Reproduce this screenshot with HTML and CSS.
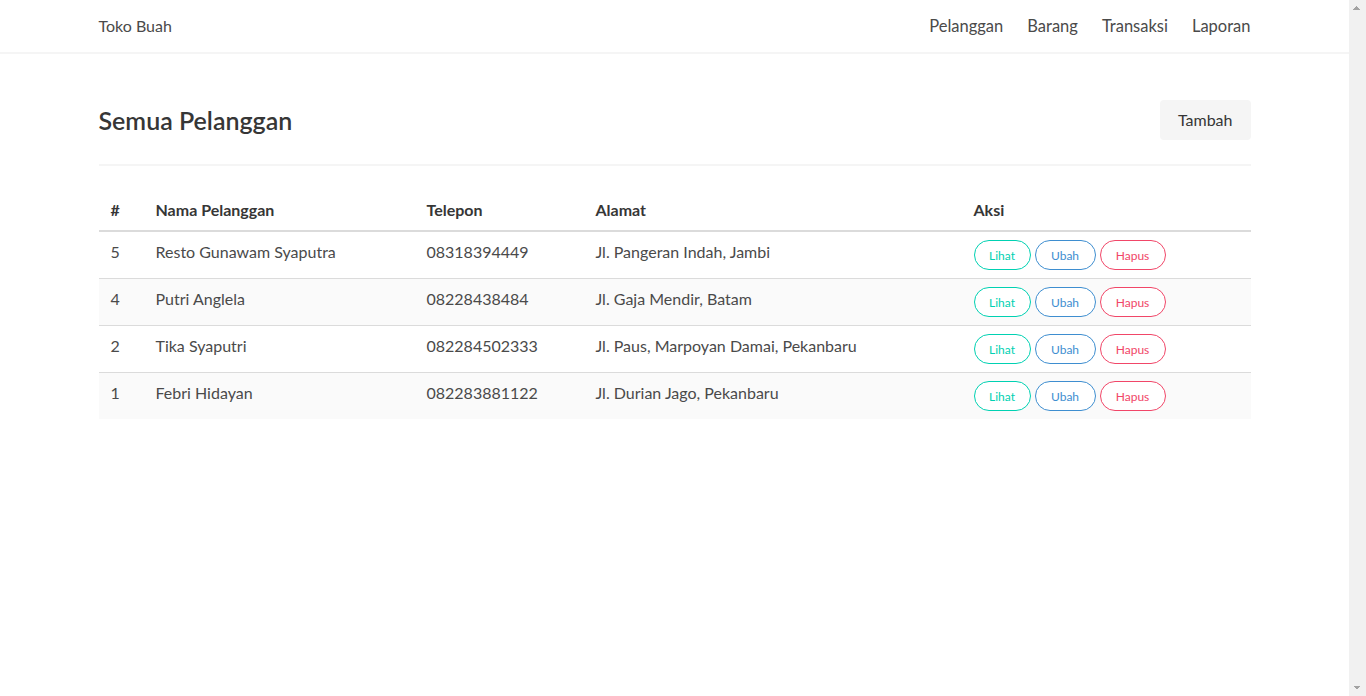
FILE: index.html
```html
<!DOCTYPE html>
<html lang="id">
<head>
<meta charset="utf-8">
<title>Toko Buah</title>
<link rel="stylesheet" href="styles.css">
</head>
<body>
<nav class="navbar">
  <div class="container nav-inner">
    <a class="nav-item brand" href="#">Toko Buah</a>
    <div class="nav-end">
      <a class="nav-item" href="#">Pelanggan</a>
      <a class="nav-item" href="#">Barang</a>
      <a class="nav-item" href="#">Transaksi</a>
      <a class="nav-item" href="#">Laporan</a>
    </div>
  </div>
</nav>
<section class="section">
  <div class="container">
    <div class="level">
      <h1 class="title">Semua Pelanggan</h1>
      <a class="btn-add" href="#">Tambah</a>
    </div>
    <hr class="divider">
    <table class="table">
      <thead>
        <tr>
          <th class="c-no">#</th>
          <th class="c-name">Nama Pelanggan</th>
          <th class="c-tel">Telepon</th>
          <th class="c-addr">Alamat</th>
          <th class="c-act">Aksi</th>
        </tr>
      </thead>
      <tbody>
        <tr>
          <td>5</td><td>Resto Gunawam Syaputra</td><td>08318394449</td><td>Jl. Pangeran Indah, Jambi</td>
          <td><div class="actions"><a class="pill pill-view" href="#">Lihat</a><a class="pill pill-edit" href="#">Ubah</a><a class="pill pill-del" href="#">Hapus</a></div></td>
        </tr>
        <tr>
          <td>4</td><td>Putri Anglela</td><td>08228438484</td><td>Jl. Gaja Mendir, Batam</td>
          <td><div class="actions"><a class="pill pill-view" href="#">Lihat</a><a class="pill pill-edit" href="#">Ubah</a><a class="pill pill-del" href="#">Hapus</a></div></td>
        </tr>
        <tr>
          <td>2</td><td>Tika Syaputri</td><td>082284502333</td><td>Jl. Paus, Marpoyan Damai, Pekanbaru</td>
          <td><div class="actions"><a class="pill pill-view" href="#">Lihat</a><a class="pill pill-edit" href="#">Ubah</a><a class="pill pill-del" href="#">Hapus</a></div></td>
        </tr>
        <tr>
          <td>1</td><td>Febri Hidayan</td><td>082283881122</td><td>Jl. Durian Jago, Pekanbaru</td>
          <td><div class="actions"><a class="pill pill-view" href="#">Lihat</a><a class="pill pill-edit" href="#">Ubah</a><a class="pill pill-del" href="#">Hapus</a></div></td>
        </tr>
      </tbody>
    </table>
  </div>
</section>
</body>
</html>
```
FILE: styles.css
```css
/* page frame with a classic 17px scrollbar track at the right edge */
html {
  height: 100%;
  background-color: #f1f1f1;
  background-image:
    linear-gradient(to top left, #a3a3a3 50%, transparent 50%),
    linear-gradient(to top right, #a3a3a3 50%, transparent 50%),
    linear-gradient(to bottom left, #a3a3a3 50%, transparent 50%),
    linear-gradient(to bottom right, #a3a3a3 50%, transparent 50%);
  background-size: 4px 4px;
  background-repeat: no-repeat;
  background-position:
    right 9px top 6px,
    right 5px top 6px,
    right 9px bottom 6px,
    right 5px bottom 6px;
}
* { box-sizing: border-box; }
body {
  margin: 0 17px 0 0;
  min-height: 100%;
  font-family: "Lato", "Open Sans", sans-serif;
  font-size: 16px;
  line-height: 1.5;
  color: #4a4a4a;
  background: #fff;
}
a { text-decoration: none; color: inherit; }

.container {
  width: 1152px;
  margin: 0 auto;
}

.navbar {
  height: 52px;
  background: #fff;
  box-shadow: 0 2px 0 0 #f5f5f5;
}
.nav-inner {
  display: flex;
  align-items: stretch;
  justify-content: space-between;
  height: 52px;
}
.nav-item {
  display: flex;
  align-items: center;
  padding: 8px 12px;
  color: #4a4a4a;
}
.brand { margin-left: -12px; }
.nav-end {
  display: flex;
  margin-right: -12px;
}
.nav-end .nav-item { font-size: 16.5px; }

.section {
  padding: 48px 0;
}
.level {
  display: flex;
  align-items: center;
  justify-content: space-between;
  margin-bottom: 24px;
}
.title {
  margin: 0;
  font-size: 25px;
  font-weight: 600;
  line-height: 1.125;
  color: #363636;
}
.btn-add {
  display: inline-flex;
  align-items: center;
  height: 40px;
  padding: 0 18px;
  background: #f5f5f5;
  border-radius: 4px;
  color: #363636;
}
.divider {
  border: none;
  height: 2px;
  background: #f5f5f5;
  margin: 0 0 24px;
}

.table {
  width: 100%;
  border-collapse: collapse;
  border-spacing: 0;
  color: #363636;
}
.table th, .table td {
  padding: 8px 12px;
  text-align: left;
  vertical-align: top;
  border-bottom: 1px solid #dbdbdb;
}
.table th {
  font-weight: 700;
  color: #363636;
  border-bottom: 2px solid #dbdbdb;
}
.table td { color: #4a4a4a; }
.table tbody tr:nth-child(even) { background: #fafafa; }
.table tbody tr:last-child td { border-bottom: none; }
.c-no { width: 45px; }
.c-name { width: 271px; }
.c-tel { width: 169px; }
.c-addr { width: 378px; }

.actions {
  display: flex;
  gap: 4px;
}
.pill {
  display: inline-flex;
  align-items: center;
  justify-content: center;
  height: 30px;
  padding: 1px 14px 0;
  border: 1px solid;
  border-radius: 290px;
  font-size: 12px;
  background: #fff;
}
.pill-view { color: #00d1b2; border-color: #00d1b2; width: 57px; }
.pill-edit { color: #3e8ed0; border-color: #3e8ed0; width: 61px; }
.pill-del { color: #f14668; border-color: #f14668; width: 66px; }
```
